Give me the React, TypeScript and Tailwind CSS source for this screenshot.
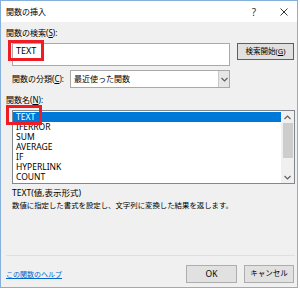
import React from "react";

const jp = { fontFamily: '"Noto Sans", "Noto Sans CJK JP", sans-serif' };

const items = ["TEXT", "IFERROR", "SUM", "AVERAGE", "IF", "HYPERLINK", "COUNT"];

function Chevron({ up }: { up?: boolean }) {
  return (
    <svg width="7" height="5" viewBox="0 0 7 5">
      <path
        d={up ? "M0.5 4 L3.5 1 L6.5 4" : "M0.5 1 L3.5 4 L6.5 1"}
        fill="none"
        stroke="#606060"
        strokeWidth="1.2"
      />
    </svg>
  );
}

export default function App() {
  return (
    <div className="relative w-[300px] h-[290px] bg-white text-[#000]" style={jp}>
      <div className="w-[298px] h-[288px] border border-[#86b0dc] flex flex-col">
        {/* Title bar */}
        <div className="h-[21px] bg-white flex items-center pl-[5px] pr-[9px]">
          <span className="text-[8px] leading-none">関数の挿入</span>
          <span className="ml-auto text-[10px] leading-none text-[#333] mr-[24px]">?</span>
          <svg width="8" height="8" viewBox="0 0 8 8">
            <path d="M0.5 0.5 L7.5 7.5 M7.5 0.5 L0.5 7.5" stroke="#333" strokeWidth="1" />
          </svg>
        </div>

        {/* Body */}
        <div className="flex-1 flex flex-col bg-[#f0f0f0] pl-[5px]">
          <div className="mt-[5px] h-[11px] leading-[11px] text-[8px]">
            関数の検索(<span className="underline">S</span>):
          </div>

          <div className="mt-[5px] flex pl-[6px]">
            <div className="w-[218px] h-[23px] bg-white border border-[#a9a9a9] pl-[3px] pt-[1px] text-[9px] leading-[12px]">
              TEXT
            </div>
            <div className="ml-[7px] w-[57px] h-[17px] bg-[#e1e1e1] border border-[#0078d7] flex items-center justify-center text-[7.5px] leading-none">
              検索開始(<span className="underline">G</span>)
            </div>
          </div>

          <div className="mt-[4px] pl-[6px] flex items-center h-[18px]">
            <span className="w-[58px] text-[8px] leading-none whitespace-nowrap">
              関数の分類(<span className="underline">C</span>):
            </span>
            <div className="w-[160px] h-[18px] bg-white border border-[#a9a9a9] flex items-center">
              <span className="pl-[3px] text-[8px] leading-none">最近使った関数</span>
              <div className="ml-auto w-[11px] h-full bg-[#e6e6e6] border-l border-[#c8c8c8] flex items-center justify-center">
                <Chevron />
              </div>
            </div>
          </div>

          <div className="mt-[7px] h-[10px] leading-[10px] text-[8px]">
            関数名(<span className="underline">N</span>):
          </div>

          <div className="mt-[5px] ml-[6px] w-[283px] h-[74px] bg-white border border-[#828790] flex">
            <div className="flex-1 pt-[1px]">
              {items.map((it, i) => (
                <div
                  key={it}
                  className={
                    "h-[10px] leading-[10px] pl-[3px] text-[8.5px] " +
                    (i === 0 ? "bg-[#0078d7] text-white" : "")
                  }
                >
                  {it}
                </div>
              ))}
            </div>
            <div className="w-[13px] bg-[#f0f0f0] flex flex-col items-center">
              <div className="h-[12px] flex items-center">
                <Chevron up />
              </div>
              <div className="w-[10px] h-[35px] bg-[#cdcdcd]" />
              <div className="flex-1" />
              <div className="h-[12px] flex items-center">
                <Chevron />
              </div>
            </div>
          </div>

          <div className="mt-[4px] pl-[6px] h-[10px] leading-[10px] text-[8.5px]">TEXT(値,表示形式)</div>
          <div className="mt-[2px] pl-[6px] h-[10px] leading-[10px] text-[7.4px] whitespace-nowrap">
            数値に指定した書式を設定し、文字列に変換した結果を返します。
          </div>

          <div className="mt-[45px] mr-[2px] h-px bg-[#dfdfdf]" />

          <div className="mt-[9px] flex items-center h-[18px] pr-[3px]">
            <span className="text-[7px] leading-none text-[#0066cc] underline">この関数のヘルプ</span>
            <div className="ml-auto w-[51px] h-[18px] bg-[#e1e1e1] border border-[#adadad] flex items-center justify-center text-[8.5px] leading-none">
              OK
            </div>
            <div className="ml-[7px] w-[50px] h-[18px] bg-[#e1e1e1] border border-[#adadad] flex items-center justify-center text-[7.5px] leading-none">
              キャンセル
            </div>
          </div>
        </div>
      </div>

      {/* Red annotation boxes */}
      <div className="absolute left-[8px] top-[40px] w-[36px] h-[21px] border-[3px] border-[#ee1c25]" />
      <div className="absolute left-[6px] top-[105px] w-[36px] h-[20px] border-[3px] border-[#ee1c25]" />
    </div>
  );
}
